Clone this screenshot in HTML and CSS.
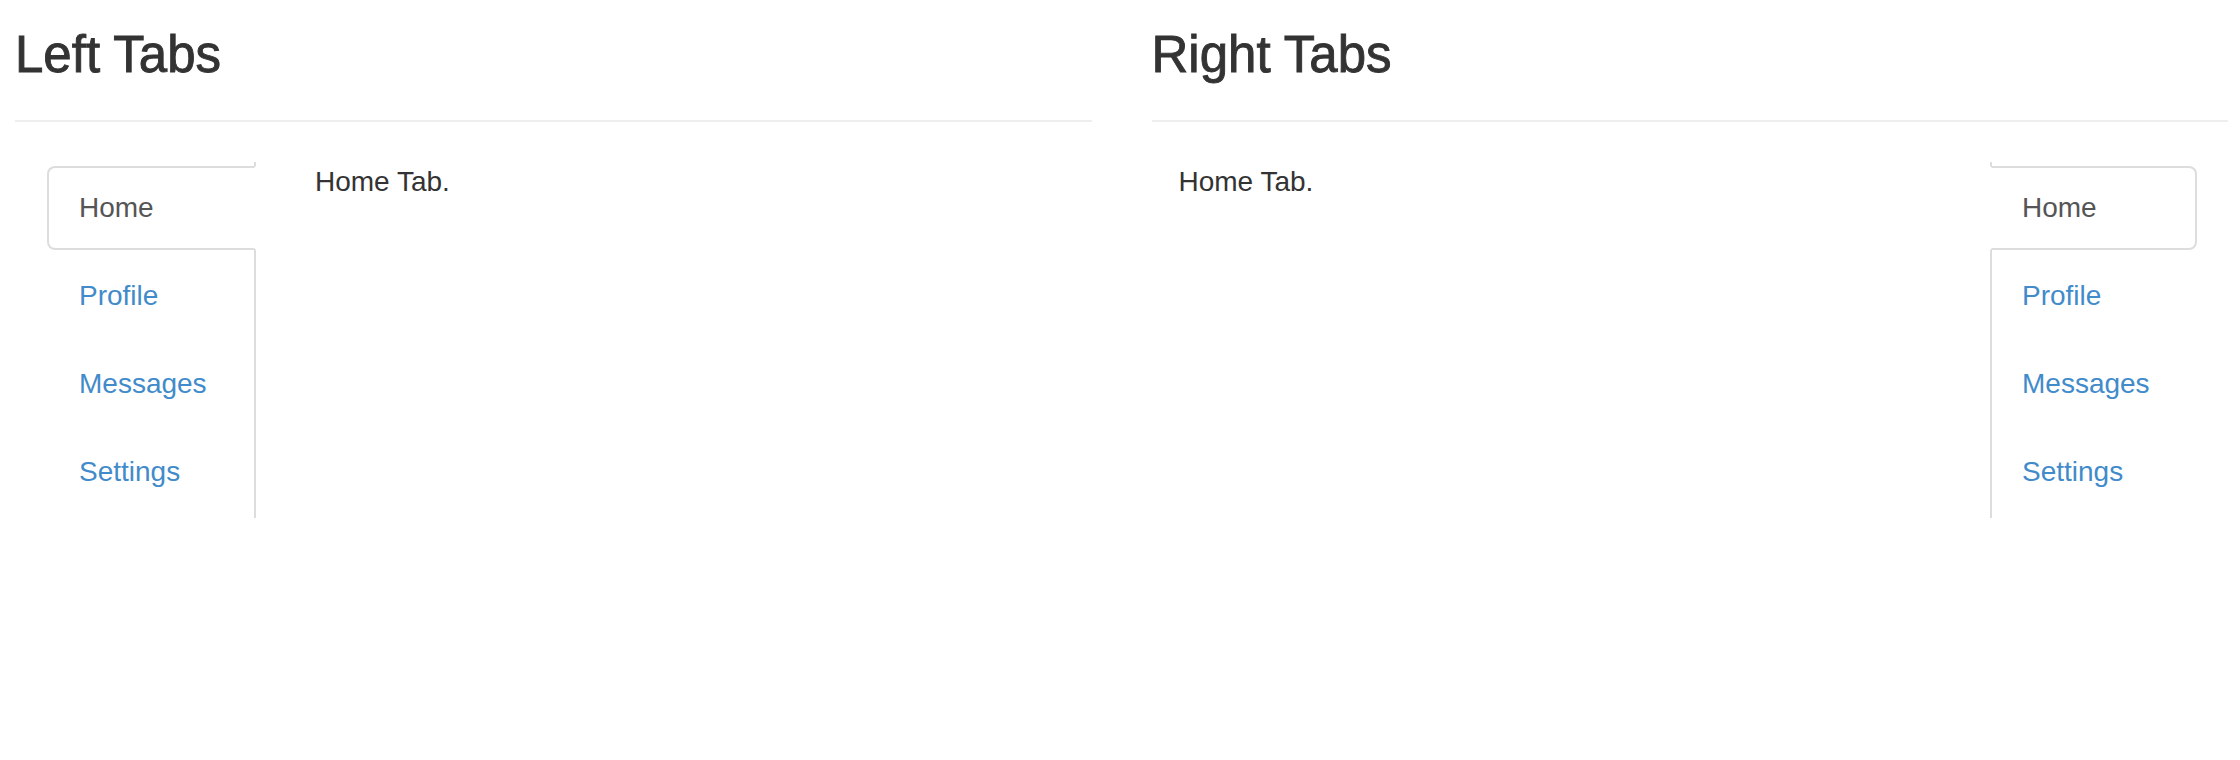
FILE: index.html
```html
<!DOCTYPE html>
<html>
<head>
<meta charset="utf-8">
<title>Tabs</title>
<link rel="stylesheet" href="styles.css">
</head>
<body>
<div class="page">
  <section class="col">
    <div class="page-header"><h3>Left Tabs</h3></div>
    <div class="tabs tabs-left">
      <ul class="nav nav-left">
        <li class="active"><a href="#home-l">Home</a></li>
        <li><a href="#profile-l">Profile</a></li>
        <li><a href="#messages-l">Messages</a></li>
        <li><a href="#settings-l">Settings</a></li>
      </ul>
      <div class="pane pane-left">Home Tab.</div>
    </div>
  </section>
  <section class="col">
    <div class="page-header"><h3>Right Tabs</h3></div>
    <div class="tabs tabs-right">
      <div class="pane pane-right">Home Tab.</div>
      <ul class="nav nav-right">
        <li class="active"><a href="#home-r">Home</a></li>
        <li><a href="#profile-r">Profile</a></li>
        <li><a href="#messages-r">Messages</a></li>
        <li><a href="#settings-r">Settings</a></li>
      </ul>
    </div>
  </section>
</div>
</body>
</html>
```
FILE: styles.css
```css
* { box-sizing: border-box; }

html, body {
  margin: 0;
  padding: 0;
  background: #fff;
}

body {
  font-family: "Liberation Sans", Helvetica, Arial, sans-serif;
  font-size: 28px;
  line-height: 40px;
  color: #333;
}

.page {
  display: grid;
  grid-template-columns: 1fr 1fr;
  column-gap: 60px;
  padding: 0 12px 0 15px;
}

.page-header {
  padding-bottom: 18px;
  border-bottom: 2px solid #eee;
  margin-bottom: 40px;
}

.page-header h3 {
  margin: 27px 0 19px;
  font-size: 51px;
  line-height: 1.1;
  font-weight: 500;
  color: #333;
  -webkit-text-stroke: 0.9px #333;
}

.tabs {
  display: flex;
  align-items: flex-start;
}

.tabs-left {
  padding-left: 32px;
}

.tabs-right {
  padding-right: 31px;
}

.nav {
  list-style: none;
  margin: 0;
  padding: 4px 0 0;
}

.nav li {
  margin-bottom: 4px;
}

.nav a {
  display: block;
  padding: 20px 30px;
  line-height: 40px;
  border: 2px solid transparent;
  color: #428bca;
  text-decoration: none;
}

.nav li.active a {
  color: #555;
  background: #fff;
  border-color: #ddd;
}

.nav-left {
  width: 209px;
  border-right: 2px solid #ddd;
}

.nav-left a {
  margin-right: -2px;
  border-radius: 8px 0 0 8px;
}

.nav-left li.active a {
  border-right-color: transparent;
}

.nav-right {
  width: 207px;
  border-left: 2px solid #ddd;
}

.nav-right a {
  margin-left: -2px;
  border-radius: 0 8px 8px 0;
}

.nav-right li.active a {
  border-left-color: transparent;
}

.pane {
  flex: 1;
}

.pane-left {
  padding-left: 59px;
}

.pane-right {
  padding-left: 27px;
}
```
